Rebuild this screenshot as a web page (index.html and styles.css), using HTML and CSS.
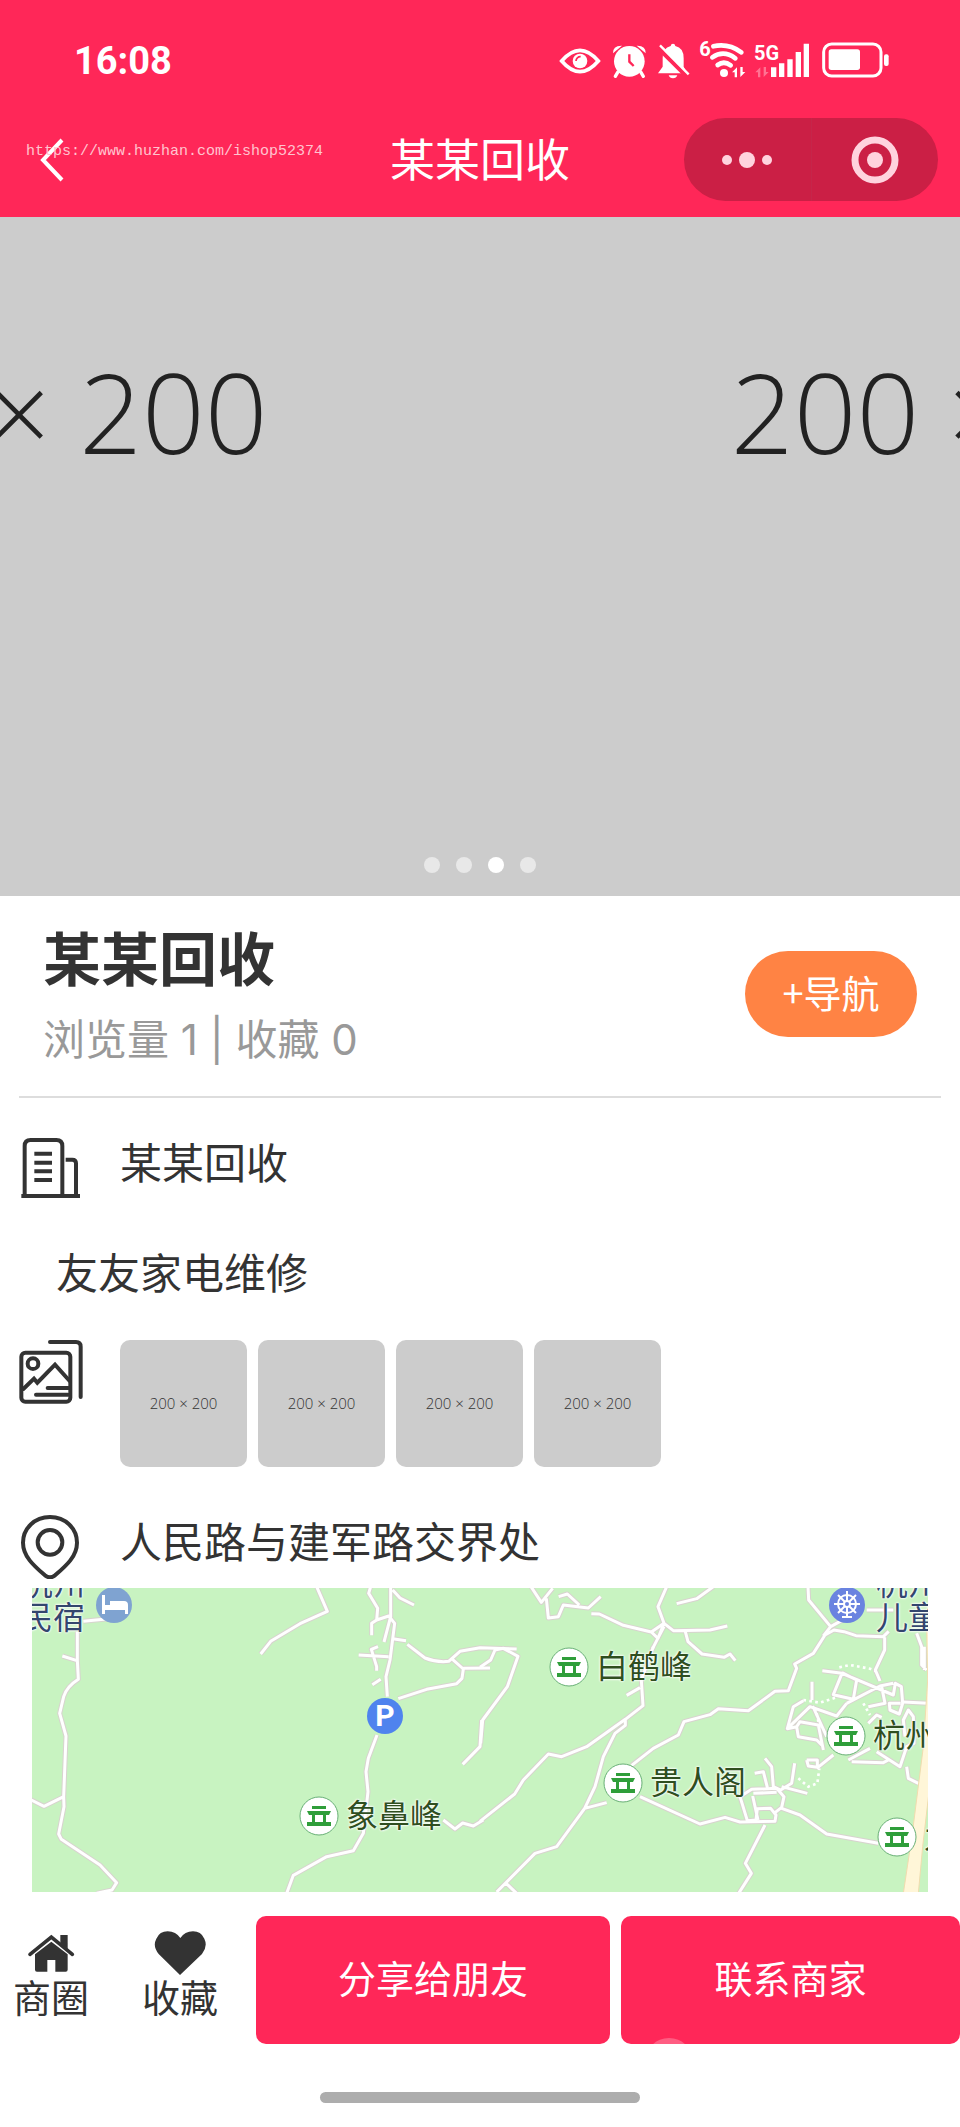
FILE: index.html
```html
<!doctype html>
<html lang="zh-CN">
    <head>
        <meta charset="utf-8" />
        <meta name="viewport" content="width=device-width" />
        <title>某某回收</title>
        <link rel="stylesheet" href="styles.css">
    </head>
    <body>
        <header class="header">
            <div class="status">
                <span class="time">16:08</span>
                <svg class="status-icons" viewBox="210 114 1026 132" fill="#fff" stroke="none">
                    <!-- eye -->
                    <path d="M245 183Q300 119 355 183Q300 247 245 183Z" fill="none" stroke="#fff" stroke-width="11" />
                    <circle cx="300" cy="183" r="22" />
                    <path d="M288 183a13 13 0 0 1 14-13" fill="none" stroke="#ff2758" stroke-width="5" />
                    <!-- alarm -->
                    <path d="M399 160q-1-24 27-23zM497 160q1-24-27-23z" />
                    <path d="M413 217l-7 12M483 217l7 12" stroke="#fff" stroke-width="10" stroke-linecap="round" />
                    <circle cx="448" cy="184" r="46" />
                    <path d="M448 163v22l13 13" fill="none" stroke="#ff2758" stroke-width="7" />
                    <!-- muted bell -->
                    <path d="M534 220l14-20v-25q0-32 24-37q1-7 7-7t7 7q25 5 25 37v25l10 20z" />
                    <path d="M566 226h26q-3 9-13 9t-13-9z" />
                    <path d="M531 140l92 92" stroke="#ff2758" stroke-width="13" />
                    <path d="M540 136l86 87" stroke="#fff" stroke-width="7" />
                    <!-- wifi -->
                    <text class="net" x="658" y="169">6</text>
                    <g fill="none" stroke="#fff" stroke-width="14" stroke-linecap="round">
                        <path d="M700 139q45-10 84 18M697 172q34-23 69 3M713 195q19-14 39 1" />
                    </g>
                    <circle cx="732" cy="219" r="12" />
                    <path d="M756 217l15-15v30h-7v-15zM796 216l-15 15v-30h7v15z" />
                    <!-- signal -->
                    <text class="net" x="822" y="179">5G</text>
                    <path d="M826 217l15-15v30h-7v-15zM866 216l-15 15v-30h7v15z" opacity=".35" />
                    <path d="M873 202h16v29h-16zM897 190h16v41h-16zM922 178h16v53h-16zM947 156h16v75h-16zM971 131h16v100h-16z" />
                    <!-- battery -->
                    <rect x="1031" y="132" width="172" height="96" rx="24" fill="none" stroke="#fff" stroke-width="9" />
                    <rect x="1046" y="148" width="94" height="62" rx="8" />
                    <rect x="1212" y="163" width="14" height="35" rx="6" />
                </svg>
            </div>
            <div class="nav">
                <button class="back" aria-label="返回">
                    <svg viewBox="0 0 24 44"><path d="M22 2L3 22L22 42" fill="none" stroke="#fff" stroke-width="4" /></svg>
                </button>
                <h1>某某回收</h1>
                <div class="capsule">
                    <button aria-label="更多">
                        <svg viewBox="0 0 50 48" width="50" height="48">
                            <circle cx="5" cy="24" r="5" /><circle cx="25" cy="24" r="8" /><circle cx="45" cy="24" r="5" />
                        </svg>
                    </button>
                    <button aria-label="关闭">
                        <svg viewBox="0 0 48 48" width="48" height="48">
                            <circle cx="24" cy="24" r="20" fill="none" stroke="#ffd3de" stroke-width="7" />
                            <circle cx="24" cy="24" r="8" />
                        </svg>
                    </button>
                </div>
            </div>
            <span class="watermark">https://www.huzhan.com/ishop52374</span>
        </header>

        <div class="banner">
            <div class="track">
                <div class="slide">200 × 200</div>
                <div class="slide">200 × 200</div>
            </div>
            <div class="dots">
                <i></i>
                <i></i>
                <i class="on"></i>
                <i></i>
            </div>
        </div>

        <main>
            <div class="head">
                <div>
                    <h2>某某回收</h2>
                    <p class="count">浏览量 1 | 收藏 0</p>
                </div>
                <button class="navigate">+导航</button>
            </div>

            <div class="row">
                <svg class="icon" viewBox="57 738 192 192" fill="none" stroke="#333" stroke-width="12">
                    <path d="M74 914V768q0-18 18-18h77q18 0 18 18v146M197 809h20q11 0 11 11v94M64 918h176M103 791h53M103 818h53M103 844h53M103 870h53" />
                </svg>
                <span>某某回收</span>
            </div>
            <p class="desc">友友家电维修</p>
            <div class="row">
                <svg class="icon" viewBox="57 390 192 192" fill="none" stroke="#333" stroke-width="12" stroke-linecap="round">
                    <rect x="64" y="428" width="147" height="147" rx="12" />
                    <circle cx="99" cy="461" r="16" />
                    <path d="M150 396h78q14 0 14 14v151M70 537l32-31l10 12l53-54l44 49M143 534h62M108 554h96" />
                </svg>
                <div class="thumbs">
                    <span>200 × 200</span>
                    <span>200 × 200</span>
                    <span>200 × 200</span>
                    <span>200 × 200</span>
                </div>
            </div>
            <div class="row">
                <svg class="icon" viewBox="57 915 192 192" fill="none" stroke="#333" stroke-width="12">
                    <path d="M150 921C104 921 69 955 69 998C69 1041 105 1070 136 1097Q150 1107 164 1097C195 1070 231 1041 231 998C231 955 196 921 150 921Z" />
                    <circle cx="150" cy="997" r="37" />
                </svg>
                <span>人民路与建军路交界处</span>
            </div>

            <div class="map">
                <svg class="roads" viewBox="0 0 2688 912" preserveAspectRatio="xMinYMin slice">
                    <defs>
                        <g id="roads" fill="none" stroke-linejoin="round">
                            <g transform="translate(-96 -24)">
                                <path d="M342 115L250 124M232 155V240L235 298Q200 320 191 350L179 400L198 468L191 650L192 680L176 762L184 778L300 855L350 908L336 930L290 940M187 228L231 242M92 659L132 679L191 650" />
                                <path d="M950 20L982 94L900 131L812 184L782 222M1112 20L1106 40L1133 85L1130 120L1166 108L1184 130L1170 240L1158 290L1162 350M1172 20V110L1152 186M1130 120L1115 130V166M1178 30L1200 54L1242 75M1178 176L1218 182M1076 225L1166 230M1134 200L1114 208L1130 260V272M1142 298L1117 314M1222 193L1275 234Q1310 248 1346 244L1380 214L1440 203L1550 207M1355 236L1390 267L1386 295L1370 311L1280 328L1195 356M1390 265L1470 264" />
                                <path d="M1131 465L1105 535L1098 575L1104 635L1090 760L1060 812L980 830L880 886L860 940M1330 720L1365 747L1388 729L1420 738L1450 720M1445 420L1440 500L1388 553" />
                            </g>
                            <g transform="translate(1344 -24)">
                                <path d="M0 262L32 240L45 210L70 205L114 229L82 320L8 420L2 490M153 20L184 67L218 25M199 55L205 114L235 110L250 75L325 84L362 50M236 50L262 42L298 75M334 101L358 102L430 136L514 156L552 130L534 80L560 20M514 156L534 175L552 130L580 152L690 150L742 138M518 205L552 140M700 20L650 56L590 71M616 155L624 185L666 222L732 232L750 222L766 242" />
                                <path d="M520 200L484 300L489 377L436 418L320 500L245 530L205 522L130 600L104 642L0 724M436 418V436L405 460L370 530L345 620L314 685M480 323L440 346M380 668L314 685L230 800L165 820L50 936M76 908L110 940M455 556L520 505L595 465L612 425L690 404L715 386L805 392L885 334L925 332L950 265L944 252L1000 220L1035 165L1062 150L1092 155L1128 167L1210 170L1226 154M984 20L986 60L1052 140L1102 112M1052 140L1030 168M1160 90H1240M1214 172V210L1186 270L1200 303M1344 370L1270 366" />
                                <path d="M480 650L660 732L735 712L780 726L885 724L888 705L872 685L832 686L828 720L802 722L780 650L815 628L890 625L912 650L905 682L882 700M905 685L960 705L1040 762L1195 790M855 735L796 850L814 880L776 940M818 648L834 720M820 640L890 637M824 580L850 575L862 622M855 535L875 560L880 620L902 630L935 610L944 550M905 620L982 640" />
                                <path d="M1027 272L1086 280L1060 344L1120 358L1130 300L1086 278M1086 280L1240 345L1246 310L1264 320L1268 370L1258 402L1230 390L1228 370L1262 370M1100 370L1200 318L1240 310M996 305V360M970 362L940 380L922 446L990 380L1070 408L1100 370M922 446L950 440L960 425L1015 435L1030 510M950 440L955 470L1010 480L1025 495M998 378L1040 470M1205 320L1215 370L1165 380M1105 540L1170 505M1115 545L1210 548L1225 540M1190 515L1260 560L1280 500L1302 490L1300 410L1285 390L1270 420L1275 470M1165 430L1190 405L1205 412M1010 565L1060 525M1280 560L1285 595L1315 610M1310 160L1325 200V255L1340 270M1333 200V270M980 540H1012V562L985 558L980 540" />
                            </g>
                        </g>
                    </defs>
                    <use href="#roads" class="casing" />
                    <use href="#roads" class="road" />
                    <g transform="translate(1344 -24)">
                        <path class="highway" d="M1350 150H1340L1343 300L1330 500L1297 760L1270 940H1315L1328 800L1350 610Z" />
                        <path class="dotted" d="M1078 262L1110 255L1170 266L1190 275M970 360L1020 368L1070 352M1150 370L1170 405M1010 400L1020 450M955 595L985 620L1012 610L1018 565" />
                    </g>
                </svg>

                <div class="pin blue lodging">
                    <span>杭州<br />民宿</span>
                    <svg viewBox="0 0 36 36">
                        <circle cx="18" cy="18" r="18" fill="#7fa3d1" />
                        <path d="M6 8h3v10h5v-4h14q4 0 4 4v9h-3v-4H9v4H6z" fill="#fff" />
                    </svg>
                </div>
                <div class="pin parking">
                    <b>P</b>
                </div>
                <div class="pin blue funfair">
                    <svg viewBox="0 0 36 36" fill="none" stroke="#fff" stroke-width="2">
                        <circle cx="18" cy="18" r="18" fill="#6a83e0" stroke="none" />
                        <circle cx="18" cy="17" r="9" />
                        <path d="M18 4v26M5 17h26M9 8l18 18M27 8L9 26M13 30h10" />
                        <circle cx="18" cy="17" r="3" fill="#6a83e0" />
                    </svg>
                    <span>杭州<br />儿童</span>
                </div>

                <svg class="defs">
                    <symbol id="scenic" viewBox="0 0 40 40">
                        <circle cx="20" cy="20" r="19" fill="#fff" stroke="#69b077" stroke-width="1" />
                        <path d="M13 10h14v3H13zM8 15h24l-2 4h-3v7h5v4H8v-4h5v-7h-3zM16 19v7h8v-7z" fill="#2f9e3a" fill-rule="evenodd" />
                    </symbol>
                </svg>
                <div class="pin baihe"><svg><use href="#scenic" /></svg><span>白鹤峰</span></div>
                <div class="pin guiren"><svg><use href="#scenic" /></svg><span>贵人阁</span></div>
                <div class="pin xiangbi"><svg><use href="#scenic" /></svg><span>象鼻峰</span></div>
                <div class="pin hangzhou"><svg><use href="#scenic" /></svg><span>杭州</span></div>
                <div class="pin jiuxi"><svg><use href="#scenic" /></svg><span>九溪</span></div>
            </div>
        </main>

        <footer class="footer">
            <div class="tabs">
                <a href="#">
                    <svg viewBox="75 126 156 132" fill="#333">
                        <path d="M105 196L154 158L203 196V242q0 6-6 6H166V213H142V248H111q-6 0-6-6z" />
                        <path d="M90 196L154 144L217 196" fill="none" stroke="#333" stroke-width="11" stroke-linecap="round" />
                        <path d="M181 138h22v42l-22-18z" />
                    </svg>
                    商圈
                </a>
                <a href="#">
                    <svg viewBox="459 126 156 132" fill="#333">
                        <path d="M537 258L473 195Q454 172 466 149Q476 127 500 127Q525 128 538 147Q551 128 576 127Q600 127 610 149Q621 172 603 195Z" />
                    </svg>
                    收藏
                </a>
            </div>
            <button class="share">分享给朋友</button>
            <button class="contact">联系商家</button>
        </footer>
        <div class="home-bar"></div>
    </body>
</html>
```

FILE: styles.css
```css
* {
    margin: 0;
    padding: 0;
    box-sizing: border-box;
}

body {
    font-family: "Noto Sans CJK SC", sans-serif;
    color: #333;
    background: #fff;
    overflow-x: hidden;
}

button {
    border: 0;
    background: none;
    font-family: inherit;
    color: #fff;
    cursor: pointer;
}

a {
    color: inherit;
    text-decoration: none;
}

svg {
    display: block;
    flex: none;
}

/* header */
.header {
    position: relative;
    background: #ff2758;
    color: #fff;
    padding-bottom: 16px;
}

.status {
    display: flex;
    justify-content: space-between;
    height: 118px;
    padding: 38px 68px 0 74px;
}

.time {
    font: bold 38px/46px Roboto, sans-serif;
}

.status-icons {
    width: 342px;
    height: 44px;
}

.net {
    font: bold 60px Roboto, sans-serif;
}

.nav {
    display: grid;
    grid-template-columns: 1fr auto 1fr;
    align-items: center;
    padding: 0 22px 0 40px;
}

.back {
    width: 24px;
    height: 44px;
}

.nav h1 {
    font-size: 45px;
    font-weight: 400;
    line-height: 60px;
    margin: 0 18px 4px 0;
}

.capsule {
    display: flex;
    justify-self: end;
    width: 254px;
    height: 83px;
    border-radius: 42px;
    background: #cb1f45;
}

.capsule button {
    flex: 1;
    display: flex;
    align-items: center;
    justify-content: center;
    fill: #ffd3de;
}

.capsule button + button {
    border-left: 1px solid #c5264a;
}

.watermark {
    position: absolute;
    left: 26px;
    top: 142px;
    font: 15px/20px "Liberation Mono", monospace;
    color: #ffc4cf;
}

/* banner */
.banner {
    position: relative;
    height: 679px;
    overflow: hidden;
    background: #ccc;
}

.track {
    display: flex;
    margin-left: -48%;
}

.slide {
    flex: 0 0 100vw;
    padding-top: 119px;
    text-align: center;
    font: 300 110px/150px "Open Sans", sans-serif;
    color: #222;
}

.dots {
    position: absolute;
    left: 0;
    right: 0;
    bottom: 23px;
    display: flex;
    justify-content: center;
    gap: 16px;
}

.dots i {
    width: 16px;
    height: 16px;
    border-radius: 50%;
    background: #e8e8e8;
}

.dots .on {
    background: #fff;
}

/* shop info */
.head {
    display: flex;
    align-items: center;
    justify-content: space-between;
    margin: 0 19px;
    padding: 24px 24px 28px;
    border-bottom: 2px solid #ddd;
}

.head h2 {
    font-size: 58px;
    line-height: 72px;
}

.count {
    margin-top: 20px;
    font-family: Inter, "Noto Sans CJK SC", sans-serif;
    font-size: 42px;
    line-height: 56px;
    color: #999;
}

.navigate {
    width: 172px;
    height: 86px;
    padding-bottom: 6px;
    border-radius: 43px;
    background: #ff8344;
    font-size: 38px;
}

.row {
    display: flex;
    align-items: flex-start;
    gap: 37px;
    margin: 38px 19px 0;
    font-size: 42px;
    line-height: 50px;
}

.icon {
    width: 64px;
    height: 64px;
}

.desc {
    margin: 46px 56px 0;
    font-size: 42px;
    line-height: 50px;
}

.desc + .row {
    margin-top: 44px;
}

.thumbs {
    display: flex;
    gap: 11px;
    padding-bottom: 10px;
}

.thumbs span {
    width: 127px;
    height: 127px;
    border-radius: 10px;
    background: #ccc;
    color: #333;
    font: 300 15px/127px "Open Sans", sans-serif;
    text-align: center;
}

/* map */
.map {
    position: relative;
    height: 304px;
    margin: 9px 32px 0;
    overflow: hidden;
    background: #c8f3c1;
}

.roads {
    width: 100%;
    height: 100%;
}

.casing {
    stroke: #d8d3cf;
    stroke-width: 15px;
}

.road {
    stroke: #fff;
    stroke-width: 9px;
}

.dotted {
    fill: none;
    stroke: #fff;
    stroke-width: 8px;
    stroke-dasharray: 8 10;
}

.highway {
    fill: #fff6d8;
    stroke: #f0dcae;
    stroke-width: 3px;
}

.defs {
    position: absolute;
    width: 0;
    height: 0;
}

.pin {
    position: absolute;
    display: flex;
    align-items: center;
    gap: 7px;
    font-size: 32px;
    line-height: 34px;
    white-space: nowrap;
    color: #2f4f1f;
    text-shadow: 0 0 2px #fff, 0 0 2px #fff, 0 0 3px #fff;
}

.pin span {
    padding-bottom: 6px;
}

.pin svg {
    width: 40px;
    height: 40px;
}

.blue {
    align-items: flex-end;
    gap: 11px;
    color: #33466e;
}

.blue svg {
    width: 36px;
    height: 36px;
    margin-bottom: 15px;
}

.lodging {
    left: -11px;
    top: -24px;
}

.funfair {
    left: 797px;
    top: -24px;
}

.parking {
    left: 335px;
    top: 110px;
}

.parking b {
    width: 36px;
    border-radius: 50%;
    background: #4f83ee;
    color: #fff;
    font: bold 30px/36px Roboto, sans-serif;
    text-align: center;
    text-shadow: none;
}

.baihe {
    left: 517px;
    top: 59px;
}

.guiren {
    left: 571px;
    top: 175px;
}

.xiangbi {
    left: 267px;
    top: 208px;
}

.hangzhou {
    left: 794px;
    top: 128px;
}

.jiuxi {
    left: 845px;
    top: 229px;
}

/* bottom bar */
.footer {
    display: flex;
    gap: 11px;
    margin-top: 24px;
    font-size: 38px;
    line-height: 42px;
}

.tabs {
    display: flex;
    gap: 53px;
    padding: 15px 27px 0 13px;
}

.tabs a {
    display: flex;
    flex-direction: column;
    align-items: center;
}

.tabs svg {
    width: 52px;
    height: 44px;
}

.share,
.contact {
    position: relative;
    height: 128px;
    padding-bottom: 8px;
    border-radius: 10px;
    background: #ff2758;
    font-size: 38px;
    overflow: hidden;
}

.share {
    flex: 354;
}

.contact {
    flex: 339;
}

.contact::after {
    content: "";
    position: absolute;
    left: 24px;
    top: 122px;
    width: 48px;
    height: 48px;
    border-radius: 50%;
    background: rgba(255, 255, 255, 0.25);
}

.home-bar {
    width: 320px;
    height: 11px;
    margin: 48px auto 24px;
    border-radius: 6px;
    background: #adadad;
}
```
